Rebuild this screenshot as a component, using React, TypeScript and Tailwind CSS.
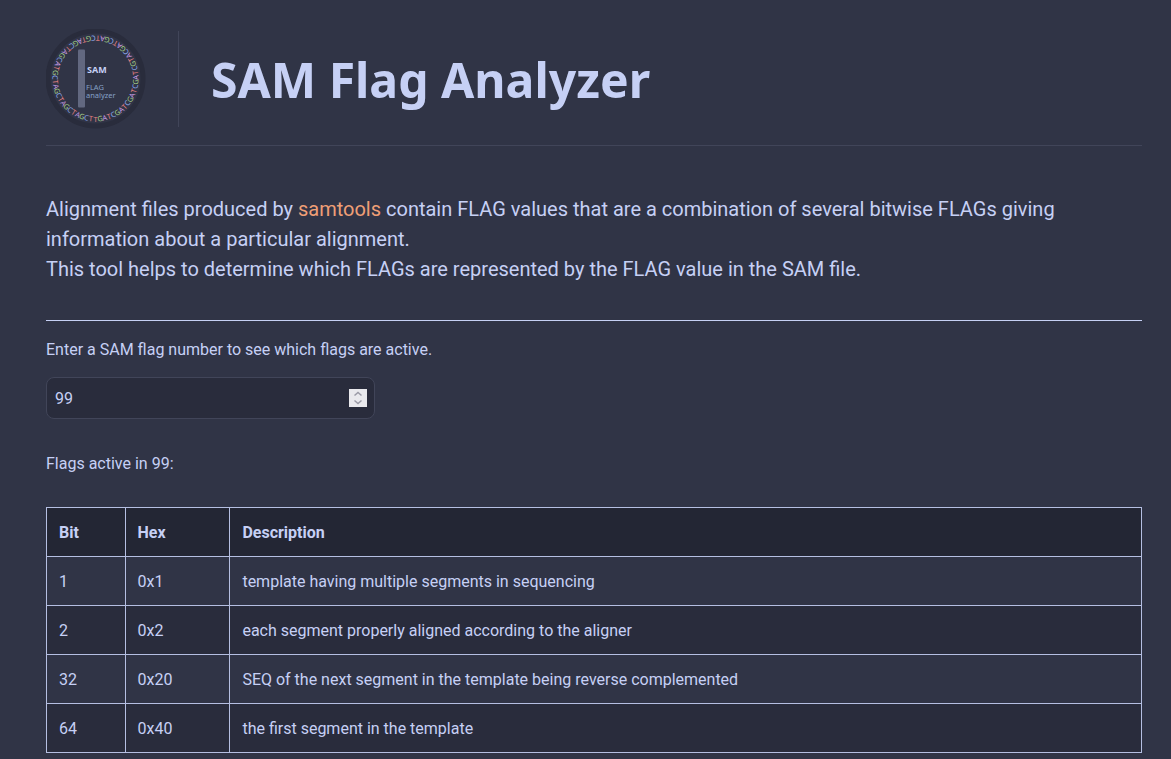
import React, { useState } from 'react';

const rows = [
  { bit: 1, hex: '0x1', description: 'template having multiple segments in sequencing' },
  { bit: 2, hex: '0x2', description: 'each segment properly aligned according to the aligner' },
  { bit: 32, hex: '0x20', description: 'SEQ of the next segment in the template being reverse complemented' },
  { bit: 64, hex: '0x40', description: 'the first segment in the template' },
];

// read counter-clockwise, starting at the bottom of the ring
const ringBases = 'TGATCGATCGATCGATCGTACGATCGATCGTAGCTAGCATGCTAGCTAGCTAGCT';
const baseColors: Record<string, string> = {
  A: '#ca9ee6',
  C: '#8caaee',
  G: '#a6d189',
  T: '#e78284',
};

const Logo: React.FC = () => (
  <svg width="100" height="100" viewBox="0 0 100 100" className="block shrink-0">
    <circle cx="49.5" cy="49.5" r="47.5" fill="#303446" stroke="#292c3c" strokeWidth="5" />
    {ringBases.split('').map((base, i) => {
      const deg = (i * 360) / ringBases.length;
      const rad = (deg * Math.PI) / 180;
      const x = 49.5 + 43 * Math.sin(rad);
      const y = 49.5 + 43 * Math.cos(rad);
      return (
        <text
          key={i}
          x={x}
          y={y}
          textAnchor="middle"
          transform={`rotate(${-deg} ${x} ${y})`}
          fontFamily="'Noto Sans', sans-serif"
          fontSize="7.4"
          fill={baseColors[base]}
        >
          {base}
        </text>
      );
    })}
    <rect x="32" y="20.5" width="7" height="58" rx="1" fill="#626880" />
    <text x="41" y="43.5" fontFamily="'Noto Sans', sans-serif" fontSize="9" fontWeight="700" fill="#c6d0f5">
      SAM
    </text>
    <text x="40" y="61" fontFamily="'Noto Sans', sans-serif" fontSize="7.5" fill="#85a1c6">
      FLAG
    </text>
    <text x="40" y="68.5" fontFamily="'Noto Sans', sans-serif" fontSize="7.5" fill="#85a1c6">
      analyzer
    </text>
  </svg>
);

const App: React.FC = () => {
  const [flag, setFlag] = useState('99');

  return (
    <div className="min-h-screen bg-[#303446] pl-[46px] pr-[29px] pt-[29px] pb-10 font-['Roboto',sans-serif] text-[#c6d0f5]">
      {/* Header */}
      <header className="flex h-[117px] items-start border-b border-[#414559]">
        <Logo />
        <div className="ml-[32px] mt-[2px] flex h-[96px] items-center border-l border-[#414559] pl-[32px]">
          <h1 className="pt-[2px] font-['Noto_Sans',sans-serif] text-[48.1px] font-bold leading-none">
            SAM Flag Analyzer
          </h1>
        </div>
      </header>

      {/* Intro */}
      <p className="mt-[48px] text-[20px] leading-[30px]">
        Alignment files produced by <span className="text-[#ef9f76]">samtools</span> contain FLAG values that are a
        combination of several bitwise FLAGs giving information about a particular alignment.
        <br />
        This tool helps to determine which FLAGs are represented by the FLAG value in the SAM file.
      </p>

      <hr className="mt-[36px] border-[#c6d0f5]" />

      <p className="mt-[17px] text-base leading-[24px]">Enter a SAM flag number to see which flags are active.</p>

      <div className="relative mt-[15px] w-[329px]">
        <input
          type="number"
          value={flag}
          onChange={e => setFlag(e.target.value)}
          className="block h-[42px] w-full appearance-none rounded-lg border border-[#414559] bg-[#292c3c] px-2 text-base text-[#c6d0f5] [&::-webkit-inner-spin-button]:appearance-none"
        />
        {/* spinner box sits over the input's right edge */}
        <div className="absolute right-[8px] top-[12px] flex h-[18px] w-[18px] items-center justify-center bg-[#e9e9ed]">
          <svg width="18" height="18" viewBox="0 0 18 18" fill="none" stroke="#9a9aa6" strokeWidth="1.5">
            <path d="M5.5 6.5 L9 3.5 L12.5 6.5" />
            <path d="M5.5 11.5 L9 14.5 L12.5 11.5" />
          </svg>
        </div>
      </div>

      <p className="mt-[33px] text-base leading-[24px]">Flags active in {flag}:</p>

      {/* Result table */}
      <table className="mt-[31px] w-full border-collapse text-base">
        <thead>
          <tr className="bg-[#232634]">
            <th className="h-[49px] w-[78.5px] border border-[#b5bfe2] px-3 pt-px text-left font-bold">Bit</th>
            <th className="h-[49px] w-[104.4px] border border-[#b5bfe2] px-3 pt-px text-left font-bold">Hex</th>
            <th className="h-[49px] border border-[#b5bfe2] pl-[12.5px] pr-3 pt-px text-left font-bold">Description</th>
          </tr>
        </thead>
        <tbody>
          {rows.map((row, i) => (
            <tr key={row.bit} className={i % 2 === 0 ? 'bg-[#303446]' : 'bg-[#292c3c]'}>
              <td className="h-[49px] border border-[#b5bfe2] px-3 pt-px">{row.bit}</td>
              <td className="h-[49px] border border-[#b5bfe2] px-3 pt-px">{row.hex}</td>
              <td className="h-[49px] border border-[#b5bfe2] pl-[12.5px] pr-3 pt-px">{row.description}</td>
            </tr>
          ))}
        </tbody>
      </table>
    </div>
  );
};

export default App;
